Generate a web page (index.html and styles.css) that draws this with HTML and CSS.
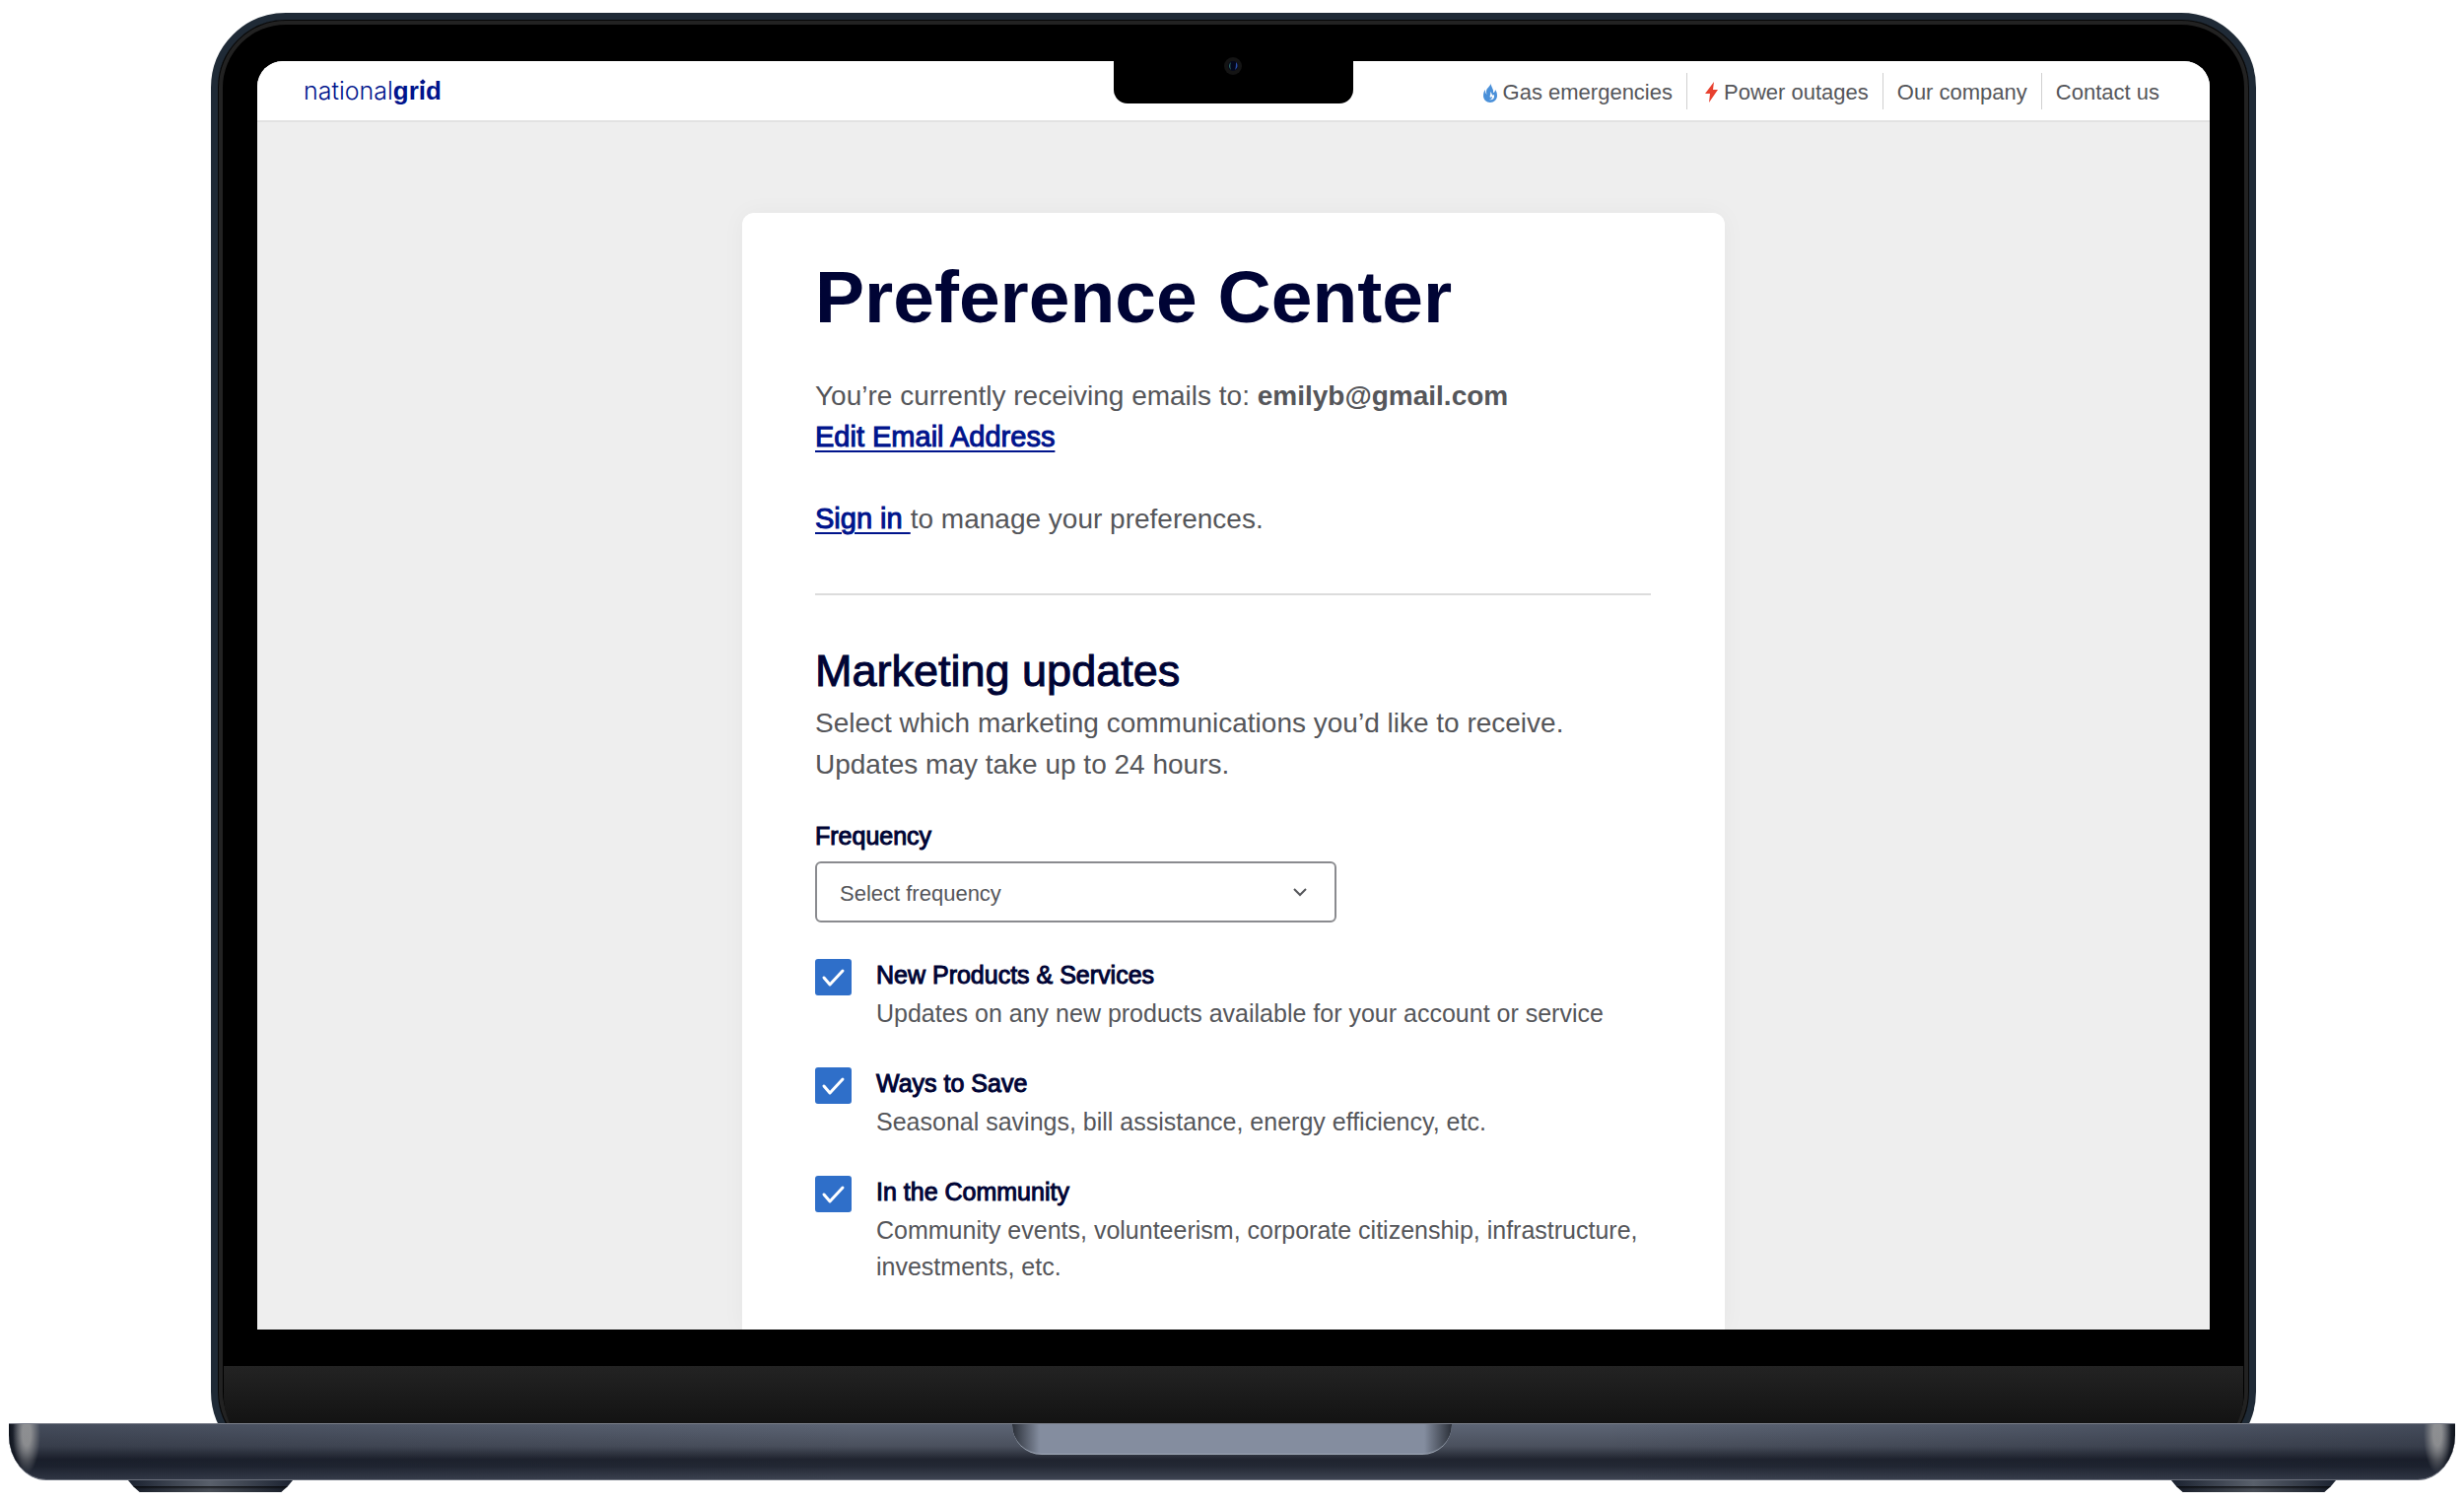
FILE: index.html
```html
<!DOCTYPE html>
<html lang="en">
<head>
    <meta charset="UTF-8">
    <meta name="viewport" content="width=device-width, initial-scale=1.0">
    <title>Preference Center | National Grid</title>
    <link rel="stylesheet" href="styles.css">
</head>
<body>

<div class="laptop">
    <div class="lid">
        <div class="camera-notch">
            <svg width="18" height="18" viewBox="0 0 18 18" aria-hidden="true">
                <circle cx="9" cy="9" r="9" fill="#141414"/>
                <circle cx="9" cy="9" r="5" fill="#04081c"/>
                <path d="M7 5a5 5 0 0 0 0 8c-1-3-1-5 0-8z" fill="#2f6b62"/>
                <path d="M12 5a5 5 0 0 1-1 8c1-3 1-5 1-8z" fill="#2b4fa8"/>
            </svg>
        </div>

        <div class="screen">
            <header class="header">
                <a class="logo" href="#">national<b>gr<span class="logo-i">i</span>d</b></a>
                <nav class="navbar">
                    <a href="#gas">
                        <svg width="14" height="20" viewBox="0 0 14 20" aria-hidden="true">
                            <path d="M8 0C8 3 3 5 3 9c0 1 0 2 1 3C2 11 2 9 2 7 1 8 0 10 0 13c0 4 3 7 7 7s7-3 7-7c0-3-1-5-2-6 0 2-1 3-2 3C11 6 7 4 8 0z" fill="#4a90d9"/>
                            <path d="M7 9c1 3-1 4 0 6l2-1c0 2-1 3-3 3 3 1 5-1 5-3 0-1 0-2-1-2l-1 1c0-2-1-3-2-4z" fill="#fff"/>
                        </svg>
                        Gas emergencies
                    </a>
                    <a href="#power">
                        <svg class="bolt" width="13" height="21" viewBox="0 0 13 21" aria-hidden="true">
                            <path d="M9 0L0 12h5L4 21l9-13H8z" fill="#e8412f"/>
                        </svg>
                        Power outages
                    </a>
                    <a href="#company">Our company</a>
                    <a href="#contact">Contact us</a>
                </nav>
            </header>

            <main class="card">
                <h1>Preference Center</h1>
                <p class="text">You’re currently receiving emails to: <strong>emilyb@gmail.com</strong><br>
                <a href="#edit">Edit Email Address</a></p>
                <p class="text sign-in"><a href="#signin">Sign in </a>to manage your preferences.</p>

                <hr>

                <h2>Marketing updates</h2>
                <p class="text">Select which marketing communications you’d like to receive.<br>
                Updates may take up to 24 hours.</p>

                <label class="label frequency-label" for="frequency">Frequency</label>
                <select class="frequency" id="frequency">
                    <option>Select frequency</option>
                    <option>Weekly</option>
                    <option>Monthly</option>
                </select>

                <div class="options">
                    <div class="option">
                        <input type="checkbox" id="products" checked>
                        <div>
                            <label class="label" for="products">New Products &amp; Services</label>
                            <p>Updates on any new products available for your account or service</p>
                        </div>
                    </div>
                    <div class="option">
                        <input type="checkbox" id="save" checked>
                        <div>
                            <label class="label" for="save">Ways to Save</label>
                            <p>Seasonal savings, bill assistance, energy efficiency, etc.</p>
                        </div>
                    </div>
                    <div class="option">
                        <input type="checkbox" id="community" checked>
                        <div>
                            <label class="label" for="community">In the Community</label>
                            <p>Community events, volunteerism, corporate citizenship, infrastructure, investments, etc.</p>
                        </div>
                    </div>
                </div>
            </main>
        </div>

        <div class="chin"></div>
    </div>

    <div class="base">
        <div class="base-notch"></div>
    </div>
    <div class="feet">
        <div class="foot"></div>
        <div class="foot"></div>
    </div>
</div>

</body>
</html>
```
FILE: styles.css
```css
* {
    box-sizing: border-box;
}
body {
    margin: 0;
    background-color: #fff;
    font-family: "Liberation Sans", Arial, sans-serif;
    color: #55565a;
}
h1, h2, p {
    margin: 0;
}

/* laptop */
.laptop {
    padding-top: 13px;
}
.lid {
    position: relative;
    margin: 0 211px -44px 214px;
    padding: 42px 6px 0;
    border: 7px solid #1f2a36;
    border-radius: 76px;
    background-color: #000;
    box-shadow: inset 0 0 0 1px #070707, inset 0 0 0 5px #222;
}
.camera-notch {
    position: absolute;
    z-index: 1;
    top: 38px;
    left: 50%;
    width: 243px;
    height: 47px;
    margin-left: -122px;
    border-radius: 0 0 14px 14px;
    background-color: #000;
}
.camera-notch svg {
    display: block;
    margin: 0 auto;
}
.screen {
    margin: 0 34px 37px;
    border-radius: 26px 26px 0 0;
    background-color: #eee;
    overflow: hidden;
}
.chin {
    height: 95px;
    border-radius: 0 0 64px 64px;
    background: linear-gradient(#232323, #131313 58px);
}
.base {
    position: relative;
    height: 58px;
    margin: 0 9px;
    border-top: 1px solid #7b7f8a;
    border-bottom: 1px solid #6b707c;
    border-radius: 0 0 38px 38px / 0 0 46px 46px;
    background:
        radial-gradient(ellipse 14px 40px at 18px 10px, rgba(160, 160, 160, 0.8) 30%, transparent),
        radial-gradient(ellipse 14px 40px at calc(100% - 18px) 10px, rgba(160, 160, 160, 0.8) 30%, transparent),
        linear-gradient(90deg, #0d111a, transparent 14px, transparent calc(100% - 14px), #0d111a),
        linear-gradient(90deg, rgba(10, 16, 30, 0.3), transparent 35%, transparent 65%, rgba(10, 16, 30, 0.3)),
        linear-gradient(#5d6575, #4a505d 40%, #20242f 64%, #232834 76%, #3e4452);
}
.base-notch {
    width: 446px;
    height: 31px;
    margin: 0 auto;
    border-bottom: 1px solid #a3acba;
    border-radius: 0 0 30px 30px;
    background: linear-gradient(90deg, #2b3039, #848d9f 28px, #848d9f calc(100% - 28px), #2b3039);
}
.feet {
    display: flex;
    justify-content: space-between;
    padding: 0 130px 10px;
}
.foot {
    width: 167px;
    height: 12px;
    background:
        linear-gradient(transparent 6px, rgba(0, 0, 0, 0.8) 6px, rgba(0, 0, 0, 0.2) 9px),
        linear-gradient(90deg, #1b2230, #59606b 50%, #1b2230);
    clip-path: polygon(0 0, 100% 0, 97% 50%, 93% 100%, 7% 100%, 3% 50%);
}

/* header */
.header {
    display: flex;
    justify-content: space-between;
    align-items: center;
    height: 62px;
    padding: 0 38px 0 47px;
    border-bottom: 2px solid #e2e2e2;
    background-color: #fff;
}
.logo {
    font-family: Inter, "Liberation Sans", sans-serif;
    font-size: 25px;
    font-weight: 300;
    color: #00148c;
    text-decoration: none;
}
.logo b {
    font-family: "Liberation Sans", Arial, sans-serif;
    font-size: 26px;
    font-weight: bold;
}
/* diamond over the dot of the i */
.logo-i {
    position: relative;
}
.logo-i::before {
    content: "";
    position: absolute;
    top: 4px;
    left: 2px;
    width: 4px;
    height: 4px;
    background-color: #00148c;
    transform: rotate(45deg);
}
.navbar {
    display: flex;
}
.navbar a {
    display: flex;
    align-items: center;
    gap: 6px;
    height: 37px;
    padding: 3px 14px 0 14px;
    font-size: 22px;
    color: #55565a;
    text-decoration: none;
}
.navbar a:last-child {
    padding-right: 13px;
}
.navbar a + a {
    border-left: 1px solid #d0d0d0;
}
.bolt {
    margin-left: 4px;
}

/* preference card */
.card {
    max-width: 997px;
    margin: 92px auto 0;
    padding: 43px 75px 45px 74px;
    border-radius: 12px 12px 0 0;
    background-color: #fff;
    box-shadow: 0 0 24px rgba(0, 0, 0, 0.04);
}
h1 {
    margin-bottom: 38px;
    font-size: 75px;
    line-height: 84px;
    color: #000435;
}
h2 {
    margin-bottom: 6px;
    font-size: 45px;
    font-weight: normal;
    line-height: 52px;
    color: #000435;
    -webkit-text-stroke: 1px #000435;
}
.text {
    font-size: 28px;
    line-height: 42px;
}
.text a {
    font-size: 29px;
    line-height: 1;
    color: #00148c;
    text-decoration-thickness: 2px;
    text-underline-offset: 4px;
    -webkit-text-stroke: 1px #00148c;
}
.sign-in {
    margin-top: 41px;
}
hr {
    margin: 54px 0 51px;
    border: none;
    border-top: 2px solid #dcdcdc;
}
.label {
    display: block;
    font-size: 25px;
    line-height: 37px;
    color: #000435;
    -webkit-text-stroke: 1px #000435;
}
.frequency-label {
    margin: 33px 0 7px;
}
.frequency {
    display: block;
    width: 100%;
    max-width: 529px;
    height: 62px;
    padding: 3px 23px 0;
    border: 2px solid #8a8b8f;
    border-radius: 6px;
    background: #fff url("data:image/svg+xml,%3Csvg xmlns='http://www.w3.org/2000/svg' width='14' height='10' fill='none' stroke='%2355565a' stroke-width='2'%3E%3Cpath d='M1 2l6 6 6-6'/%3E%3C/svg%3E") no-repeat right 28px center;
    font-family: inherit;
    font-size: 22px;
    color: #55565a;
    appearance: none;
}
.options {
    display: grid;
    gap: 34px;
    margin-top: 35px;
}
.option {
    display: flex;
    align-items: flex-start;
    gap: 25px;
}
.option input {
    flex: none;
    width: 37px;
    height: 37px;
    margin: 2px 0 0;
    border-radius: 3px;
    background-color: #fff;
    border: 2px solid #2f6fc9;
    appearance: none;
}
.option input:checked {
    background: #2f6fc9 url("data:image/svg+xml,%3Csvg xmlns='http://www.w3.org/2000/svg' width='37' height='37' fill='none' stroke='white' stroke-width='3' stroke-linecap='round' stroke-linejoin='round'%3E%3Cpath d='M9 19l6 7L28 12'/%3E%3C/svg%3E") no-repeat center;
}
.option p {
    margin-top: 2px;
    font-size: 25px;
    line-height: 37px;
}
```
